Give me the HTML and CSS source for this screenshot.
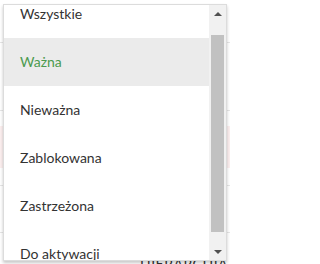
FILE: index.html
```html
<!DOCTYPE html>
<html lang="pl">
<head>
<meta charset="utf-8">
<link rel="stylesheet" href="styles.css">
</head>
<body>
<div class="page">
  <div class="bg-row r1"></div>
  <div class="bg-row r2"></div>
  <div class="bg-row r3"></div>
  <div class="bg-row r4"></div>
  <div class="bg-row r5"></div>
  <div class="bg-row r6"></div>
  <div class="bg-text">HIERARCHIA</div>

  <div class="dropdown">
    <div class="viewport">
      <ul class="options">
        <li class="opt">Wszystkie</li>
        <li class="opt active">Ważna</li>
        <li class="opt">Nieważna</li>
        <li class="opt">Zablokowana</li>
        <li class="opt">Zastrzeżona</li>
        <li class="opt">Do aktywacji</li>
      </ul>
    </div>
    <div class="scrollbar">
      <div class="sb-btn"><span class="tri up"></span></div>
      <div class="sb-track"><div class="sb-thumb"></div></div>
      <div class="sb-btn"><span class="tri down"></span></div>
    </div>
  </div>
</div>
</body>
</html>
```

FILE: styles.css
```css
html, body {
  margin: 0;
  padding: 0;
  background: #ffffff;
}
body {
  font-family: Lato, "Open Sans", Arial, sans-serif;
  width: 230px;
  height: 264px;
  overflow: hidden;
}
.page {
  position: relative;
  width: 230px;
  height: 264px;
}
.bg-row {
  border-bottom: 1px solid #e6e6e6;
}
.r1 { height: 42px; }
.r2 { height: 67px; }
.r3 { height: 15px; border-bottom: none; }
.r4 { height: 42px; background: #fcefef; border-bottom: none; }
.r5 { height: 17px; }
.r6 { height: 46px; }
.bg-text {
  padding: 22px 0 0 140px;
  font-size: 14px;
  color: #333;
  letter-spacing: 0.5px;
}

.dropdown {
  position: absolute;
  left: 3px;
  top: 4px;
  width: 222px;
  height: 255px;
  border: 1px solid #dcdcdc;
  background: #fff;
  box-shadow: 0 2px 3px rgba(0, 0, 0, 0.22);
  display: flex;
}
.viewport {
  flex: 1;
  overflow: hidden;
}
.options {
  list-style: none;
  margin: -15px 0 0 0;
  padding: 0;
}
.opt {
  height: 48px;
  line-height: 48px;
  padding-left: 16px;
  font-size: 14px;
  color: #333333;
}
.opt.active {
  background: #ebebeb;
  color: #4b9a4f;
}

.scrollbar {
  width: 17px;
  background: #f1f1f1;
  display: flex;
  flex-direction: column;
}
.sb-btn {
  height: 17px;
  display: flex;
  align-items: center;
  justify-content: center;
}
.sb-track {
  flex: 1;
  padding: 13px 2px 11px 2px;
  display: flex;
}
.sb-thumb {
  flex: 1;
  background: #c1c1c1;
}
.tri {
  width: 0;
  height: 0;
  border-left: 4px solid transparent;
  border-right: 4px solid transparent;
}
.tri.up { border-bottom: 4px solid #505050; }
.tri.down { border-top: 4px solid #505050; }
```
